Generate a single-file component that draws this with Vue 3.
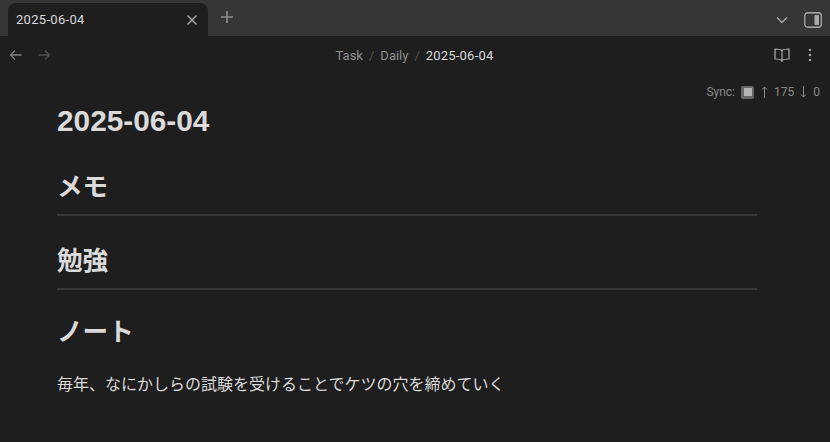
<template>
  <div class="app">
    <!-- tab bar -->
    <div class="tabbar">
      <div class="tab">
        <span class="tab-title">2025-06-04</span>
        <svg class="tab-close" width="14" height="14" viewBox="0 0 14 14"><path d="M2.500 2.500l9 9M11.500 2.500l-9 9" /></svg>
      </div>
      <svg class="tab-new" width="16" height="16" viewBox="0 0 16 16"><path d="M8 2v12M2 8h12" /></svg>
      <div class="tabbar-right">
        <svg class="icon-chev" width="14" height="14" viewBox="0 0 14 14"><path d="M2 4.500l5 5 5-5" /></svg>
        <svg class="icon-side" width="18" height="16" viewBox="0 0 18 16">
          <rect x="0.750" y="0.750" width="16.500" height="14.500" rx="3" class="side-box" />
          <rect x="10.500" y="3" width="4.500" height="10" rx="1" class="side-fill" />
        </svg>
      </div>
    </div>

    <!-- nav bar -->
    <div class="navbar">
      <div class="nav-arrows">
        <svg class="arrow" width="14" height="14" viewBox="0 0 14 14"><path d="M12.500 7h-11M6 2.500L1.500 7 6 11.500" /></svg>
        <svg class="arrow off" width="14" height="14" viewBox="0 0 14 14"><path d="M1.500 7h11M8 2.500L12.500 7 8 11.500" /></svg>
      </div>
      <div class="crumbs">
        <span class="crumb">Task</span>
        <span class="sep">/</span>
        <span class="crumb">Daily</span>
        <span class="sep">/</span>
        <span class="crumb current">2025-06-04</span>
      </div>
      <div class="nav-actions">
        <svg class="book" width="16" height="16" viewBox="0 0 16 16"><path d="M8 3.500C6.500 2 4 2 1 2v10c3 0 5.500 0 7 1.500 1.500-1.500 4-1.500 7-1.500V2c-3 0-5.500 0-7 1.500zM8 3.500V15" /></svg>
        <svg class="dots" width="4" height="14" viewBox="0 0 4 14"><circle cx="2" cy="2" r="1.200" /><circle cx="2" cy="7" r="1.200" /><circle cx="2" cy="12" r="1.200" /></svg>
      </div>
    </div>

    <!-- note -->
    <div class="content">
      <div class="sync">
        <span>Sync:</span>
        <span class="sync-box"><span class="sync-inner"></span></span>
        <svg class="sync-arrow up" width="7" height="12" viewBox="0 0 7 12"><path d="M3.500 12V1M1 3.500L3.500 1 6 3.500" /></svg>
        <span>175</span>
        <svg class="sync-arrow" width="7" height="12" viewBox="0 0 7 12"><path d="M3.500 0v11M1 8.500L3.500 11 6 8.500" /></svg>
        <span>0</span>
      </div>
      <div class="note">
        <h1>2025-06-04</h1>
        <h2>メモ</h2>
        <h2>勉強</h2>
        <h2 class="plain">ノート</h2>
        <p>毎年、なにかしらの試験を受けることでケツの穴を締めていく</p>
      </div>
    </div>
  </div>
</template>

<script setup>
</script>

<style>
html, body {
  margin: 0;
  background: #1e1e1e;
}
</style>

<style scoped>
.app {
  width: 830px;
  height: 442px;
  overflow: hidden;
  background: #1e1e1e;
  font-family: "Liberation Sans", "Noto Sans CJK JP", sans-serif;
  color: #dadada;
}
svg {
  display: block;
  fill: none;
}
.tabbar {
  height: 36px;
  box-sizing: border-box;
  padding: 3px 8px 0 8px;
  background: #363636;
  display: flex;
  align-items: flex-start;
}
.tab {
  width: 200px;
  height: 33px;
  box-sizing: border-box;
  padding: 0 9px 0 8px;
  background: #1e1e1e;
  border-radius: 8px 8px 0 0;
  display: flex;
  align-items: center;
  justify-content: space-between;
}
.tab-title {
  font-family: Roboto, sans-serif;
  font-size: 13px;
  letter-spacing: 0.3px;
  color: #dadada;
}
.tab-close path {
  stroke: #ababab;
  stroke-width: 1.400;
}
.tab-new {
  margin: 6px 0 0 11px;
}
.tab-new path {
  stroke: #8f8f8f;
  stroke-width: 1.600;
}
.tabbar-right {
  margin-left: auto;
  display: flex;
  align-items: center;
  gap: 15px;
  height: 33px;
  margin-top: -3px;
  padding-top: 3px;
}
.icon-chev path {
  stroke: #ababab;
  stroke-width: 1.400;
}
.side-box {
  stroke: #ababab;
  stroke-width: 1.300;
}
.side-fill {
  fill: #ababab;
}
.navbar {
  height: 38px;
  display: flex;
  align-items: center;
  padding: 0 18px 0 9px;
}
.nav-arrows {
  display: flex;
  gap: 14px;
}
.arrow path {
  stroke: #7f7f7f;
  stroke-width: 1.300;
}
.arrow.off path {
  stroke: #4f4f4f;
}
.crumbs {
  flex: 1;
  display: flex;
  justify-content: center;
  gap: 6px;
  font-family: Roboto, sans-serif;
  font-size: 13px;
  color: #8f8f8f;
  padding-left: 4px;
}
.sep {
  color: #555;
}
.current {
  letter-spacing: 0.2px;
  color: #dadada;
}
.nav-actions {
  display: flex;
  align-items: center;
  gap: 18px;
}
.book path {
  stroke: #ababab;
  stroke-width: 1.200;
}
.dots circle {
  fill: #ababab;
}
.content {
  position: relative;
  padding: 0 73px 0 57px;
}
.sync {
  position: absolute;
  top: 11px;
  right: 10px;
  display: flex;
  align-items: center;
  gap: 6px;
  font-family: Roboto, sans-serif;
  font-size: 12px;
  color: #8a8a8a;
}
.sync-box {
  width: 13px;
  height: 13px;
  background: #666;
  border-radius: 2px;
  display: flex;
  align-items: center;
  justify-content: center;
}
.sync-inner {
  width: 8px;
  height: 8px;
  background: #b4b4b4;
}
.sync-arrow path {
  stroke: #8a8a8a;
  stroke-width: 1;
}
.sync-arrow.up {
  margin-left: 1px;
}
.note {
  padding-top: 27px;
}
h1 {
  margin: 0 0 25px;
  font-size: 29.800px;
  line-height: 40px;
  font-weight: 700;
  color: #dadada;
}
h2 {
  margin: 24px 0 0;
  padding-bottom: 6px;
  height: 42px;
  font-size: 25.600px;
  line-height: 42px;
  font-weight: 700;
  color: #dadada;
  border-bottom: 2px solid #363636;
}
h2.plain {
  margin-top: 21px;
  border-bottom: none;
}
p {
  margin: 14px 0 0;
  font-size: 16px;
  line-height: 24px;
  color: #dadada;
}
</style>
